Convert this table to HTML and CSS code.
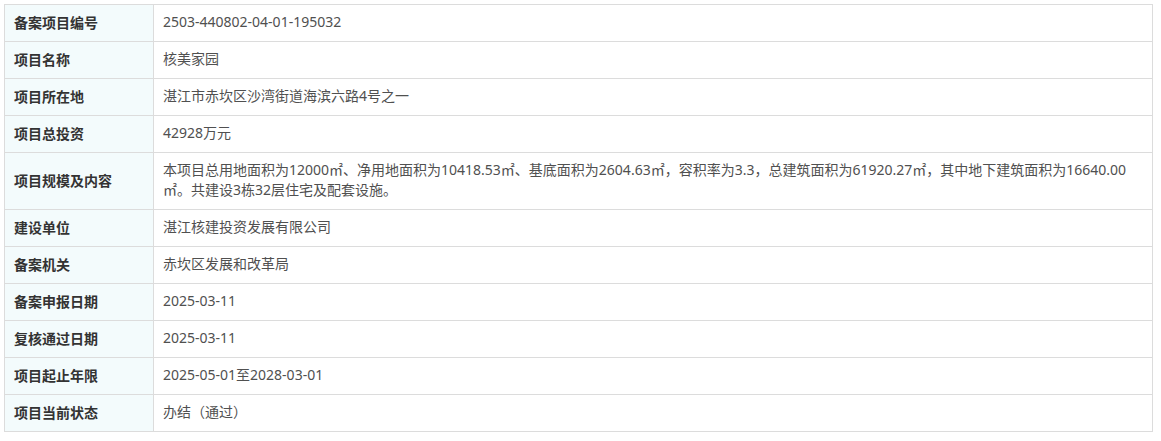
FILE: index.html
```html
<!DOCTYPE html>
<html lang="zh-CN">
<head>
  <meta charset="UTF-8" />
  <meta name="viewport" content="width=device-width, initial-scale=1.0" />
  <title>项目备案信息</title>
  <link rel="stylesheet" href="styles.css">
</head>
<body>
  <table class="info">
    <tr><th>备案项目编号</th><td>2503-440802-04-01-195032</td></tr>
    <tr><th>项目名称</th><td>核美家园</td></tr>
    <tr><th>项目所在地</th><td>湛江市赤坎区沙湾街道海滨六路4号之一</td></tr>
    <tr><th>项目总投资</th><td>42928万元</td></tr>
    <tr><th>项目规模及内容</th><td>本项目总用地面积为12000㎡、净用地面积为10418.53㎡、基底面积为2604.63㎡，容积率为3.3，总建筑面积为61920.27㎡，其中地下建筑面积为16640.00㎡。共建设3栋32层住宅及配套设施。</td></tr>
    <tr><th>建设单位</th><td>湛江核建投资发展有限公司</td></tr>
    <tr><th>备案机关</th><td>赤坎区发展和改革局</td></tr>
    <tr><th>备案申报日期</th><td>2025-03-11</td></tr>
    <tr><th>复核通过日期</th><td>2025-03-11</td></tr>
    <tr><th>项目起止年限</th><td>2025-05-01至2028-03-01</td></tr>
    <tr><th>项目当前状态</th><td>办结（通过）</td></tr>
  </table>
</body>
</html>
```

FILE: styles.css
```css
body {
  margin: 4px;
  background: #fff;
  font-family: "Noto Sans CJK SC", "Noto Sans", sans-serif;
  font-size: 14px;
  color: #555;
}

.info {
  width: 1149px;
  border-collapse: collapse;
  table-layout: fixed;
}

.info th,
.info td {
  border: 1px solid #dcdcdc;
  padding: 7px 9px 9px;
  line-height: 20px;
  text-align: left;
  vertical-align: middle;
  word-break: break-all;
}

.info th {
  width: 130px;
  background: #f3fbfc;
  color: #333;
  font-weight: bold;
}

.info td {
  font-family: "Noto Sans", "Noto Sans CJK SC", sans-serif;
  color: #505050;
}
```
